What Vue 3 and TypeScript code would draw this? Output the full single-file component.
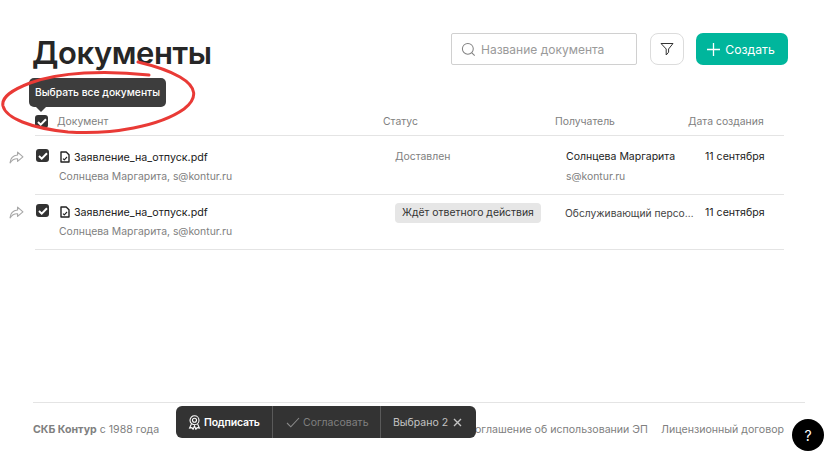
<script setup lang="ts">
interface Row { status: string; badge: boolean; recipient: string; email?: string }
const rows: Row[] = [
  { status: 'Доставлен', badge: false, recipient: 'Солнцева Маргарита', email: 's@kontur.ru' },
  { status: 'Ждёт ответного действия', badge: true, recipient: 'Обслуживающий персонал организации' },
]
</script>

<template>
  <div class="page">
    <header class="top">
      <h1 class="title">Документы</h1>
      <div class="tools">
        <div class="search">
          <svg width="15" height="15" viewBox="0 0 16 16" fill="none" stroke="#808080" stroke-width="1.1"><circle cx="7.3" cy="7.3" r="5.8"/><path d="M11.6 11.6l3 3"/></svg>
          <span>Название документа</span>
        </div>
        <button class="filter">
          <svg width="14" height="14" viewBox="0 0 14 14" fill="none" stroke="#333" stroke-width="1" stroke-linejoin="round"><path d="M1 1.5h12L8.6 7v3.2L6.2 13V7z"/></svg>
        </button>
        <button class="create">
          <svg width="13" height="13" viewBox="0 0 13 13" stroke="#fff" stroke-width="1.3"><path d="M6.5 0v13M0 6.5h13"/></svg>
          Создать
        </button>
      </div>
    </header>

    <section class="table">
      <div class="head">
        <span class="check"><svg width="10" height="8" viewBox="0 0 10 8" fill="none" stroke="#fff" stroke-width="2"><path d="M1 4l2.7 2.6L9 1.2"/></svg></span>
        <span class="h-doc">Документ</span>
        <span class="h-status">Статус</span>
        <span class="h-rec">Получатель</span>
        <span>Дата создания</span>
      </div>
      <div v-for="(r, i) in rows" :key="i" class="row" :class="{ second: i === 1 }">
        <svg class="share" width="15" height="13" viewBox="0 0 14 12" fill="none" stroke="#a8a8a8" stroke-width="1.1" stroke-linejoin="round"><path d="M8 1l5 4.4L8 9.6V7.2C5 7 2.8 8.2 1 11c.3-4 2.8-6.9 7-7.3z"/></svg>
        <span class="check"><svg width="10" height="8" viewBox="0 0 10 8" fill="none" stroke="#fff" stroke-width="2"><path d="M1 4l2.7 2.6L9 1.2"/></svg></span>
        <div class="doc">
          <div class="doc-name">
            <svg width="10" height="12" viewBox="0 0 10 12" fill="none" stroke="#222" stroke-width="1.4" stroke-linejoin="round"><path d="M1 1h5.2L9 3.8V11H1z"/><path d="M3 7.6l1.3 1.2L7 6" stroke-width="1.1"/></svg>
            Заявление_на_отпуск.pdf
          </div>
          <div class="sub">Солнцева Маргарита, s@kontur.ru</div>
        </div>
        <div class="status">
          <span :class="r.badge ? 'badge' : 'plain'">{{ r.status }}</span>
        </div>
        <div class="rec">
          <div class="rec-name">{{ r.recipient }}</div>
          <div v-if="r.email" class="sub">{{ r.email }}</div>
        </div>
        <div class="date">11 сентября</div>
      </div>
    </section>

    <footer class="foot">
      <span class="brand"><b>СКБ Контур</b> с 1988 года</span>
      <span class="links"><span>Соглашение об использовании ЭП</span><span>Лицензионный договор</span></span>
    </footer>

    <div class="tooltip">Выбрать все документы</div>

    <svg class="ring" width="200" height="80" viewBox="0 0 200 80" fill="none" stroke="#e93a36" stroke-width="3" stroke-linecap="round">
      <path d="M149 15C105 10 60 12 30 23C12 30 1 37 3 46C6 58 30 68 68 72C112 75 160 66 184 49C198 38 197 27 180 17C168 10 155 6 138 2"/>
    </svg>

    <div class="bar">
      <span class="bar-item strong">
        <svg width="13" height="15" viewBox="0 0 13 15" fill="none" stroke="#fff" stroke-width="1.1"><circle cx="6.5" cy="5.3" r="4.5"/><circle cx="6.5" cy="5.3" r="2"/><path d="M3.4 9l-1.8 4 2.3-.3 1.2 1.6 1.4-3.3 1.4 3.3 1.2-1.6 2.3.3L9.6 9"/></svg>
        Подписать
      </span>
      <span class="bar-item muted">
        <svg width="14" height="11" viewBox="0 0 14 11" fill="none" stroke="#8a8a8a" stroke-width="1.1"><path d="M1 6l3.8 3.8L13 1"/></svg>
        Согласовать
      </span>
      <span class="bar-item count">
        Выбрано 2
        <svg width="9" height="9" viewBox="0 0 9 9" stroke="#c4c4c4" stroke-width="1.4"><path d="M1 1l7 7M8 1L1 8"/></svg>
      </span>
    </div>

    <button class="help">?</button>
  </div>
</template>

<style>
html, body { margin: 0; background: #fff; }
</style>

<style scoped>
.page {
  position: relative;
  width: 837px;
  height: 469px;
  overflow: hidden;
  box-sizing: border-box;
  padding: 34px 49px 0 33px;
  font-family: Inter, "Noto Sans", sans-serif;
  font-size: 10.6px;
  color: #222;
  display: flex;
  flex-direction: column;
}
.top { display: flex; justify-content: space-between; align-items: flex-start; height: 78px; }
.title { margin: 0 0 0 -1px; font-size: 31px; line-height: 38px; font-weight: 600; color: #262626; letter-spacing: -0.4px; }
.tools { display: flex; gap: 13px; margin-top: -1px; }
.search {
  width: 186px; height: 32px; box-sizing: border-box;
  border: 1px solid #d0d0d0; border-radius: 2px;
  display: flex; align-items: center; gap: 5px; padding-left: 9px;
  font-size: 12px; color: #9a9a9a;
}
.filter {
  width: 34px; height: 32px; box-sizing: border-box; padding: 0;
  border: 1px solid #dcdcdc; border-radius: 8px; background: #fff;
  display: flex; align-items: center; justify-content: center;
}
.create {
  width: 92px; height: 32px; margin-left: -1px; border: 0; border-radius: 7px; padding: 0 2px 0 0;
  background: #00b69c; color: #fff; font: inherit; font-size: 12.2px;
  display: flex; align-items: center; justify-content: center; gap: 5px;
}
.table { margin: 0 0 0 2px; }
.head {
  height: 24px; box-sizing: border-box; width: 749px;
  display: grid; grid-template-columns: 22px 325px 173px 133px 1fr;
  align-items: center; color: #808080; font-size: 10.4px; border-bottom: 1px solid #e4e4e4;
  padding-bottom: 4px;
}
.h-status { padding-left: 1px; }
.check {
  width: 13px; height: 13px; border-radius: 3px; background: #333;
  display: flex; align-items: center; justify-content: center;
}
.row {
  position: relative; width: 749px; height: 59px; box-sizing: border-box;
  display: grid; grid-template-columns: 24px 335px 171px 139px 1fr;
  padding: 13px 0 0 1px; border-bottom: 1px solid #e4e4e4;
}
.row.second { height: 55px; padding-top: 9px; }
.share { position: absolute; left: -26px; top: 15px; }
.row.second .share { top: 11px; }
.doc-name { display: flex; align-items: center; gap: 4px; height: 16px; color: #222; font-size: 10.7px; }
.sub { color: #808080; font-size: 10.4px; margin-top: 4px; line-height: 15px; }
.row .doc .sub { margin-left: -1px; }
.plain { color: #808080; font-size: 10.4px; line-height: 16px; }
.badge {
  display: inline-block; margin-top: -1px; background: #e6e6e6; border-radius: 4px;
  padding: 0 7px; line-height: 20px; font-size: 10.4px; color: #333; white-space: nowrap;
}
.rec-name { font-size: 10.5px; line-height: 16px; white-space: nowrap; overflow: hidden; text-overflow: ellipsis; width: 131px; }
.row.second .rec-name { margin-left: -1px; color: #444; margin-top: 1px; width: 131px; font-size: 10.25px; }
.date { line-height: 16px; }
.row.second .date { margin-top: 1px; }
.foot {
  position: absolute; left: 33px; top: 402px; width: 772px; box-sizing: border-box;
  border-top: 1px solid #e4e4e4; height: 55px; padding: 20px 21px 0 0;
  display: flex; justify-content: space-between; color: #808080;
}
.brand b { font-weight: 700; }
.links { display: flex; gap: 13px; }
.tooltip {
  position: absolute; left: 29px; top: 78px; height: 29px; width: 137px;
  background: #3d3d3d; color: #fff; border-radius: 5px;
  font-size: 10.3px; font-weight: 500; line-height: 29px; text-align: center; white-space: nowrap;
}
.tooltip::after {
  content: ""; position: absolute; left: 7px; bottom: -5px;
  border: 5px solid transparent; border-bottom: 0; border-top-color: #3d3d3d;
}
.ring { position: absolute; left: 0; top: 60px; pointer-events: none; }
.bar {
  position: absolute; left: 176px; top: 406px; height: 32px; width: 300px;
  background: #333; border-radius: 6px; color: #fff;
  display: flex; align-items: stretch; font-size: 10.5px;
}
.bar-item { display: flex; align-items: center; gap: 3px; box-sizing: border-box; }
.strong { width: 97px; padding-left: 12px; font-weight: 600; border-right: 1px solid #5a5a5a; letter-spacing: -0.2px; }
.muted { width: 108px; padding-left: 13px; color: #808080; border-right: 1px solid #5a5a5a; }
.count { padding-left: 12px; color: #c4c4c4; gap: 5px; }
.help {
  position: absolute; left: 792px; top: 419px; width: 32px; height: 32px; padding: 0;
  border: 0; border-radius: 50%; background: #000; color: #fff; font: inherit; font-size: 14px;
}
</style>
